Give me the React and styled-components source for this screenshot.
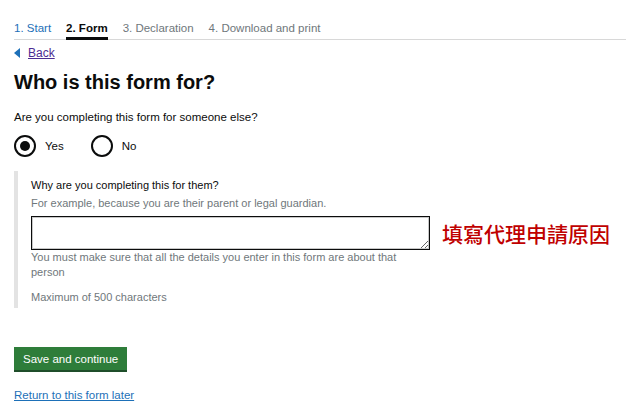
import React from "react";
import styled, { createGlobalStyle } from "styled-components";

const steps = [
  { label: "1. Start", state: "done" },
  { label: "2. Form", state: "current" },
  { label: "3. Declaration", state: "todo" },
  { label: "4. Download and print", state: "todo" },
];

function App() {
  return (
    <Page>
      <GlobalStyle />
      <Tabs>
        {steps.map((s) => (
          <Tab key={s.label} $state={s.state}>
            {s.label}
          </Tab>
        ))}
      </Tabs>
      <BackLink href="#">
        <Triangle />
        Back
      </BackLink>
      <Heading>Who is this form for?</Heading>
      <Label>Are you completing this form for someone else?</Label>
      <Radios>
        <RadioItem>
          <RadioCircle $checked />
          Yes
        </RadioItem>
        <RadioItem>
          <RadioCircle />
          No
        </RadioItem>
      </Radios>
      <Conditional>
        <SubLabel>Why are you completing this for them?</SubLabel>
        <Hint>For example, because you are their parent or legal guardian.</Hint>
        <FieldRow>
          <TextArea />
          <Annotation>填寫代理申請原因</Annotation>
        </FieldRow>
        <Hint $narrow $top={0}>
          You must make sure that all the details you enter in this form are about that
          person
        </Hint>
        <Hint $top={10}>Maximum of 500 characters</Hint>
      </Conditional>
      <Button>Save and continue</Button>
      <TextLink href="#">Return to this form later</TextLink>
    </Page>
  );
}

const GlobalStyle = createGlobalStyle`
  *, *::before, *::after { box-sizing: border-box; margin: 0; padding: 0; }
  body {
    background: #fff;
    font-family: "Liberation Sans", Arial, sans-serif;
    color: #0b0c0c;
  }
`;

const Page = styled.main`
  display: flex;
  flex-direction: column;
  align-items: flex-start;
  padding: 20px 14px 0 14px;
  width: 640px;
`;

const Tabs = styled.nav`
  display: flex;
  gap: 15px;
  width: 612px;
  border-bottom: 1px solid #d8d8d8;
`;

const Tab = styled.div`
  font-size: 11.5px;
  line-height: 16px;
  padding-bottom: 1px;
  color: ${(p) =>
    p.$state === "done" ? "#1d70b8" : p.$state === "current" ? "#0b0c0c" : "#6f777b"};
  font-weight: ${(p) => (p.$state === "current" ? 700 : 400)};
  border-bottom: 3px solid ${(p) => (p.$state === "current" ? "#0b0c0c" : "transparent")};
  margin-bottom: -1px;
`;

const BackLink = styled.a`
  display: flex;
  align-items: center;
  gap: 8px;
  margin-top: 5px;
  font-size: 12px;
  line-height: 16px;
  color: #4c2c92;
  text-decoration: underline;
`;

const Triangle = styled.span`
  width: 0;
  height: 0;
  border-top: 5px solid transparent;
  border-bottom: 5px solid transparent;
  border-right: 6px solid #1d70b8;
`;

const Heading = styled.h1`
  margin-top: 8px;
  font-size: 20px;
  line-height: 26px;
  font-weight: 700;
`;

const Label = styled.p`
  margin-top: 14px;
  font-size: 11.5px;
  line-height: 16px;
`;

const Radios = styled.div`
  display: flex;
  gap: 27px;
  margin-top: 10px;
`;

const RadioItem = styled.label`
  display: flex;
  align-items: center;
  gap: 9px;
  font-size: 11.5px;
`;

const RadioCircle = styled.span`
  width: 22px;
  height: 22px;
  border: 2px solid #0b0c0c;
  border-radius: 50%;
  display: flex;
  align-items: center;
  justify-content: center;
  &::after {
    content: "";
    width: 10px;
    height: 10px;
    border-radius: 50%;
    background: #0b0c0c;
    display: ${(p) => (p.$checked ? "block" : "none")};
  }
`;

const Conditional = styled.div`
  margin-top: 14px;
  border-left: 4px solid #e3e3e3;
  padding: 6px 0 3px 13px;
  display: flex;
  flex-direction: column;
  align-items: flex-start;
`;

const SubLabel = styled.p`
  font-size: 11px;
  line-height: 16px;
`;

const Hint = styled.p`
  font-size: 11px;
  line-height: 15px;
  color: #6f777b;
  margin-top: ${(p) => (p.$top !== undefined ? p.$top : 3)}px;
  max-width: ${(p) => (p.$narrow ? "400px" : "none")};
`;

const FieldRow = styled.div`
  display: flex;
  align-items: center;
  gap: 12px;
  margin-top: 5px;
`;

const TextArea = styled.textarea`
  width: 399px;
  height: 34px;
  border: 1px solid #0b0c0c;
  box-shadow: inset 0 0 0 1px #c8c8c8;
  resize: vertical;
  font-family: inherit;
`;

const Annotation = styled.span`
  font-family: "Noto Sans CJK TC", "Noto Sans CJK SC", sans-serif;
  font-size: 21px;
  font-weight: 500;
  line-height: 24px;
  color: #c00000;
`;

const Button = styled.button`
  margin-top: 39px;
  background: #2e7d3a;
  color: #fff;
  border: none;
  box-shadow: 0 2px 0 #1f4e2a;
  padding: 5px 9px 4px 9px;
  font-family: inherit;
  font-size: 11.5px;
  line-height: 14px;
`;

const TextLink = styled.a`
  margin-top: 17px;
  font-size: 11.5px;
  line-height: 16px;
  color: #1d70b8;
  text-decoration: underline;
`;

export default App;
